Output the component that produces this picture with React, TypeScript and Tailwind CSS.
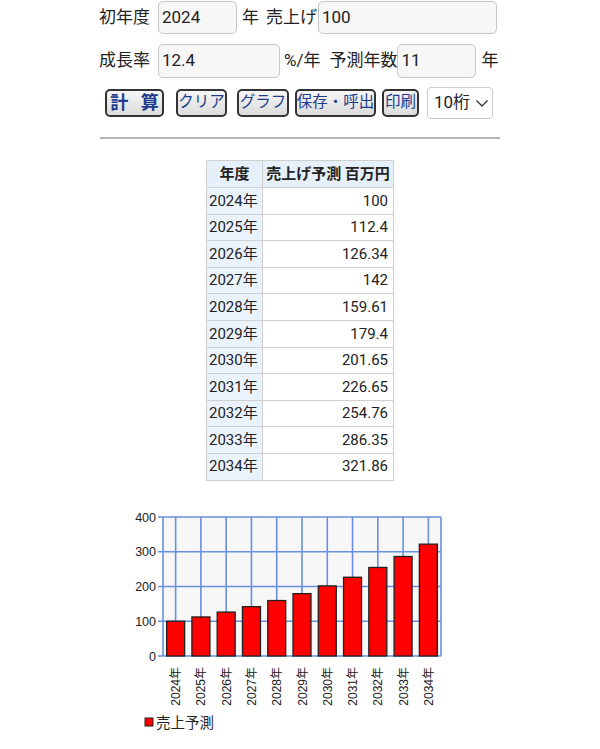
import React from "react";

const years = [2024, 2025, 2026, 2027, 2028, 2029, 2030, 2031, 2032, 2033, 2034];
const values = [100, 112.4, 126.34, 142, 159.61, 179.4, 201.65, 226.65, 254.76, 286.35, 321.86];

const FONT = '"Roboto", "Noto Sans CJK JP", sans-serif';
const CHART_FONT = '"Liberation Sans", "Noto Sans CJK JP", sans-serif';

function Chart() {
  const left = 163;
  const right = 441;
  const top = 17;
  const bottom = 156;
  const scale = (bottom - top) / 400;
  const cw = (right - left) / years.length;
  const grid = "#6a8fdf";
  const centers = years.map((_, i) => left + cw * (i + 0.5));
  return (
    <svg width={600} height={249} className="block" style={{ fontFamily: CHART_FONT }}>
      <rect x={left} y={top} width={right - left} height={bottom - top} fill="#f7f7f7" />
      {[0, 100, 200, 300, 400].map((v) => {
        const y = bottom - v * scale;
        return (
          <g key={v}>
            <line x1={158} x2={right} y1={y} y2={y} stroke={grid} strokeWidth={1.6} />
            <text x={156} y={y + 4.5} textAnchor="end" fontSize={12.5} fill="#222">
              {v}
            </text>
          </g>
        );
      })}
      <line x1={left} x2={left} y1={top} y2={bottom} stroke={grid} strokeWidth={1.6} />
      <line x1={right} x2={right} y1={top} y2={bottom} stroke={grid} strokeWidth={1.6} />
      {centers.map((cx, i) => (
        <line key={i} x1={cx} x2={cx} y1={top} y2={bottom} stroke={grid} strokeWidth={1.6} />
      ))}
      {values.map((v, i) => {
        const h = v * scale;
        return (
          <rect
            key={i}
            x={centers[i] - 9}
            y={bottom - h}
            width={18}
            height={h}
            fill="#ff0000"
            stroke="#222"
            strokeWidth={1.3}
          />
        );
      })}
      {years.map((y, i) => (
        <text
          key={y}
          x={0}
          y={0}
          fontSize={12}
          fill="#222"
          textAnchor="end"
          transform={`translate(${centers[i] + 4.5}, 167) rotate(-90)`}
        >
          {y}年
        </text>
      ))}
      <rect x={145} y={218} width={8} height={8} fill="#ff0000" stroke="#222" strokeWidth={1} />
      <text x={156} y={228} fontSize={14.5} fill="#222">
        売上予測
      </text>
    </svg>
  );
}

function Btn({ children, w, ml, big }: { children: React.ReactNode; w: string; ml: string; big?: boolean }) {
  return (
    <button
      className={`${w} ${ml} h-[28px] rounded-[5px] border-2 border-[#333] bg-gradient-to-b from-[#f6f6f6] to-[#dcdcdc] text-[#1c3d8f] leading-none flex items-center justify-center p-0 whitespace-nowrap ${
        big ? "text-[18px] font-bold tracking-[4px] pl-[4px]" : "text-[15.5px]"
      }`}
      style={{ fontFamily: FONT }}
    >
      {children}
    </button>
  );
}

export default function App() {
  return (
    <div className="w-[600px] min-h-[749px] bg-white text-[#222]" style={{ fontFamily: FONT }}>
      <div className="w-[402px] mx-auto pt-[1px]">
        <div className="flex items-center h-[33px] text-[17px]">
          <span className="w-[51px] whitespace-nowrap">初年度</span>
          <div className="ml-[8px] w-[79px] h-[33px] rounded-[5px] border border-[#c6c6c6] bg-[#f7f7f7] flex items-center pl-[3px]">
            2024
          </div>
          <span className="ml-[5px]">年</span>
          <span className="ml-[7px] whitespace-nowrap">売上げ</span>
          <div className="ml-[1px] w-[179px] h-[33px] rounded-[5px] border border-[#c6c6c6] bg-[#f7f7f7] flex items-center pl-[3px]">
            100
          </div>
        </div>
        <div className="flex items-center h-[34px] mt-[10px] text-[17px]">
          <span className="w-[51px] whitespace-nowrap">成長率</span>
          <div className="ml-[8px] w-[122px] h-[34px] rounded-[5px] border border-[#c6c6c6] bg-[#f7f7f7] flex items-center pl-[3px]">
            12.4
          </div>
          <span className="ml-[4px] whitespace-nowrap">%/年</span>
          <span className="ml-[9px] whitespace-nowrap">予測年数</span>
          <div className="w-[79px] h-[34px] rounded-[5px] border border-[#c6c6c6] bg-[#f7f7f7] flex items-center pl-[3px]">
            11
          </div>
          <span className="ml-[5px]">年</span>
        </div>
        <div className="flex items-center h-[32px] mt-[9px]">
          <Btn w="w-[59px]" ml="ml-[6px]" big>
            計 算
          </Btn>
          <Btn w="w-[51px]" ml="ml-[12px]">
            クリア
          </Btn>
          <Btn w="w-[52px]" ml="ml-[10px]">
            グラフ
          </Btn>
          <Btn w="w-[81px]" ml="ml-[6px]">
            保存・呼出
          </Btn>
          <Btn w="w-[37px]" ml="ml-[6px]">
            印刷
          </Btn>
          <div className="ml-[8px] w-[66px] h-[32px] rounded-[4px] border border-[#cccccc] bg-white flex items-center pl-[6px] text-[17px]">
            <span>10桁</span>
            <svg width="14" height="14" viewBox="0 0 14 14" className="ml-[5px]">
              <path d="M1.5 4.5 L7 10 L12.5 4.5" fill="none" stroke="#333" strokeWidth="1.3" />
            </svg>
          </div>
        </div>
        <div className="mt-[18px] mx-[1px] h-[2px] bg-[#b3b3b3]" />
      </div>
      <div className="flex justify-center mt-[21px]">
        <table className="border-collapse text-[15px]" style={{ fontFamily: FONT }}>
          <thead>
            <tr className="h-[27px]">
              <th className="w-[56px] border border-[#cfcfcf] bg-[#e6f0fb] font-bold text-center px-[3px]">年度</th>
              <th className="w-[131px] border border-[#cfcfcf] bg-[#e6f0fb] font-bold text-center px-[3px] whitespace-nowrap">
                売上げ予測 百万円
              </th>
            </tr>
          </thead>
          <tbody>
            {years.map((y, i) => (
              <tr key={y} className="h-[26.6px]">
                <td className="border border-[#cfcfcf] bg-[#eaf3fc] px-[2px] whitespace-nowrap">{y}年</td>
                <td className="border border-[#cfcfcf] bg-white text-right pr-[5px]">{values[i]}</td>
              </tr>
            ))}
          </tbody>
        </table>
      </div>
      <div className="mt-[19px]">
        <Chart />
      </div>
    </div>
  );
}
